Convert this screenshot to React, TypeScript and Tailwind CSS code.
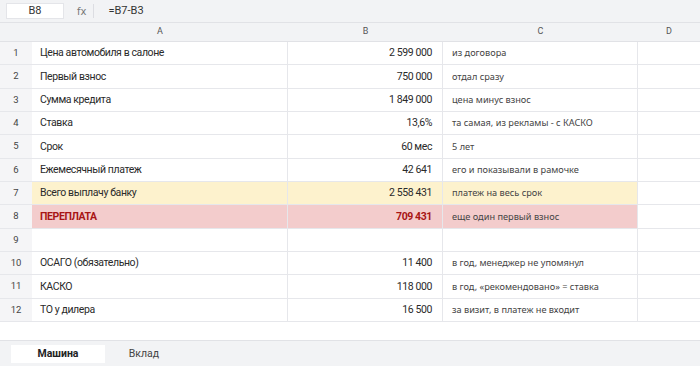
const rows: { n: number; a: string; b: string; c: string; tone?: 'yellow' | 'red' }[] = [
  { n: 1, a: 'Цена автомобиля в салоне', b: '2 599 000', c: 'из договора' },
  { n: 2, a: 'Первый взнос', b: '750 000', c: 'отдал сразу' },
  { n: 3, a: 'Сумма кредита', b: '1 849 000', c: 'цена минус взнос' },
  { n: 4, a: 'Ставка', b: '13,6%', c: 'та самая, из рекламы - с КАСКО' },
  { n: 5, a: 'Срок', b: '60 мес', c: '5 лет' },
  { n: 6, a: 'Ежемесячный платеж', b: '42 641', c: 'его и показывали в рамочке' },
  { n: 7, a: 'Всего выплачу банку', b: '2 558 431', c: 'платеж на весь срок', tone: 'yellow' },
  { n: 8, a: 'ПЕРЕПЛАТА', b: '709 431', c: 'еще один первый взнос', tone: 'red' },
  { n: 9, a: '', b: '', c: '' },
  { n: 10, a: 'ОСАГО (обязательно)', b: '11 400', c: 'в год, менеджер не упомянул' },
  { n: 11, a: 'КАСКО', b: '118 000', c: 'в год, «рекомендовано» = ставка' },
  { n: 12, a: 'ТО у дилера', b: '16 500', c: 'за визит, в платеж не входит' },
];

export default function App() {
  return (
    <div className="w-[700px] h-[366px] bg-white flex flex-col overflow-hidden text-[#333] font-['Roboto',sans-serif]">
      {/* formula bar */}
      <div className="h-[23px] bg-[#f2f3f5] border-b border-[#e1e2e6] flex items-center shrink-0">
        <div className="ml-[6px] w-[58px] h-[16px] bg-white border border-[#e4e5e9] flex items-center justify-center text-[11px] text-[#333]">
          B8
        </div>
        <span className="ml-[13px] text-[10px] text-[#777] font-['DejaVu_Sans',sans-serif]">fx</span>
        <div className="ml-[7px] w-px h-[14px] bg-[#dcdde2]" />
        <span className="ml-[14px] text-[11px] text-[#333]">=B7-B3</span>
      </div>

      {/* column headers */}
      <div className="h-[19px] bg-[#f2f3f5] border-b border-[#e1e2e6] flex shrink-0 text-[9px] text-[#555]">
        <div className="w-[32px]" />
        <div className="w-[256px] flex items-center justify-center">A</div>
        <div className="w-[155px] flex items-center justify-center">B</div>
        <div className="w-[195px] flex items-center justify-center">C</div>
        <div className="w-[62px] flex items-center justify-center">D</div>
      </div>

      {/* grid */}
      <div className="flex flex-col shrink-0">
        {rows.map((r) => {
          const bg =
            r.tone === 'yellow' ? 'bg-[#fdf2cd]' : r.tone === 'red' ? 'bg-[#f3cccc]' : 'bg-white';
          const red = r.tone === 'red';
          return (
            <div key={r.n} className="h-[23.33px] flex border-b border-[#e6e7eb] box-border">
              <div className="w-[32px] bg-[#f5f5f7] flex items-center justify-center text-[9.5px] text-[#444]">
                {r.n}
              </div>
              <div
                className={`w-[256px] ${bg} border-r border-[#e6e7eb] flex items-center pl-[8px] text-[10.5px] tracking-[-0.4px] ${
                  red ? 'font-bold text-[#a81515]' : 'text-[#2a2a2a]'
                }`}
              >
                {r.a}
              </div>
              <div
                className={`w-[155px] ${bg} border-r border-[#e6e7eb] flex items-center justify-end pr-[10px] text-[10.5px] tracking-[-0.4px] ${
                  red ? 'font-bold text-[#a81515]' : 'text-[#2a2a2a]'
                }`}
              >
                {r.b}
              </div>
              <div
                className={`w-[195px] ${bg} border-r border-[#e6e7eb] flex items-center pl-[9px] text-[9.2px] text-[#444] font-['Noto_Sans',sans-serif]`}
              >
                {r.c}
              </div>
              <div className="w-[62px] bg-white" />
            </div>
          );
        })}
      </div>

      <div className="flex-1" />

      {/* sheet tabs */}
      <div className="h-[26px] bg-[#f2f3f5] border-t border-[#e1e2e6] flex items-center shrink-0 pl-[11px] text-[10.5px]">
        <div className="w-[94px] h-[18px] bg-white flex items-center justify-center font-bold text-[#222]">
          Машина
        </div>
        <div className="w-[78px] h-[18px] flex items-center justify-center text-[#444]">Вклад</div>
      </div>
    </div>
  );
}
